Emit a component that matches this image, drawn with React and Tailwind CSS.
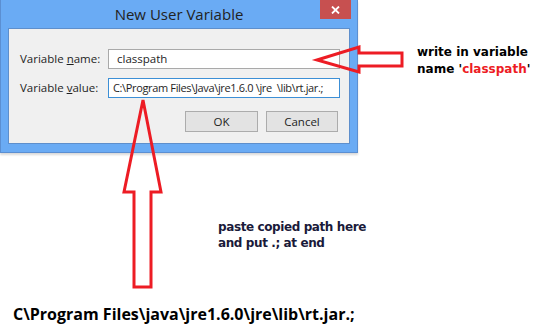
import React from 'react';

const Arrows = () => (
  <svg className="absolute inset-0 pointer-events-none" width="539" height="330" viewBox="0 0 539 330">
    <polygon
      points="317,60 359,47 359,53 402,53 402,66 359,66 359,72"
      fill="none"
      stroke="#ed1c24"
      strokeWidth="3"
      strokeLinejoin="miter"
    />
    <polygon
      points="143,100 161,192 151,192 151,287 134,287 134,192 124,192"
      fill="none"
      stroke="#ed1c24"
      strokeWidth="3"
      strokeLinejoin="miter"
    />
  </svg>
);

const App = () => {
  return (
    <div className="relative w-[539px] h-[330px] bg-white overflow-hidden" style={{ fontFamily: '"Open Sans", "Noto Sans", sans-serif' }}>
      {/* Top: dialog + note */}
      <div className="flex">
        {/* Dialog */}
        <div className="w-[358px] h-[153px] bg-[#6aabf4] border border-[#5b8fd2] border-t-0 shadow-[0_2px_2px_rgba(0,0,0,0.15)] flex flex-col">
          {/* Title bar */}
          <div className="relative h-[28px] flex items-center justify-center">
            <span className="text-[15px] text-[#222] leading-none">New User Variable</span>
            <div className="absolute right-[6px] top-0 w-[31px] h-[19px] bg-[#c75050] flex items-center justify-center">
              <svg width="9" height="8" viewBox="0 0 9 8">
                <path d="M1 0.5 L8 7.5 M8 0.5 L1 7.5" stroke="#fff" strokeWidth="1.8" />
              </svg>
            </div>
          </div>
          {/* Panel */}
          <div className="mx-[7px] h-[116px] bg-[#f0f0f0] border border-[#5e8fcc] pt-[20px] pl-[11px] pr-[8px] flex flex-col">
            <div className="flex items-center h-[20px]">
              <span className="w-[88px] text-[11.5px] text-[#1e1e1e]">
                Variable <span className="underline">n</span>ame:
              </span>
              <div className="w-[232px] h-[20px] bg-white border border-[#a9a9a9] flex items-center pl-[8px] text-[11.5px] text-[#1e1e1e]">
                classpath
              </div>
            </div>
            <div className="flex items-center h-[20px] mt-[9px]">
              <span className="w-[88px] text-[11.5px] text-[#1e1e1e]">
                Variable <span className="underline">v</span>alue:
              </span>
              <div className="w-[232px] h-[20px] bg-white border border-[#3c8fd6] flex items-center pl-[4px] text-[11px] text-[#1e1e1e] whitespace-pre overflow-hidden tracking-[-0.35px]">
                {'C:\\Program Files\\Java\\jre1.6.0 \\jre  \\lib\\rt.jar.;'}
              </div>
            </div>
            <div className="flex justify-end gap-[8px] mt-[13px] pr-[3px]">
              <button className="w-[73px] h-[21px] bg-[#e3e3e3] border border-[#acacac] text-[11.5px] text-[#1e1e1e] leading-none">
                OK
              </button>
              <button className="w-[72px] h-[21px] bg-[#e3e3e3] border border-[#acacac] text-[11.5px] text-[#1e1e1e] leading-none">
                Cancel
              </button>
            </div>
          </div>
        </div>

        {/* Note 1 */}
        <div className="ml-[59px] mt-[44px] text-[12px] font-bold leading-[17px] text-black" style={{ fontFamily: '"DejaVu Sans", Verdana, sans-serif' }}>
          <div>write in variable</div>
          <div>
            name '<span className="text-[#ed1c24]">classpath</span>'
          </div>
        </div>
      </div>

      {/* Note 2 */}
      <div className="ml-[218px] mt-[66px] text-[12px] font-bold leading-[16px] text-[#1a1a3a]" style={{ fontFamily: '"DejaVu Sans", Verdana, sans-serif' }}>
        <div className="tracking-[-0.4px]">paste copied path here</div>
        <div className="tracking-[-0.4px]">and put .; at end</div>
      </div>

      {/* Bottom path */}
      <div className="ml-[13px] mt-[55px] text-[16px] font-bold leading-none text-black">
        {'C\\Program Files\\java\\jre1.6.0\\jre\\lib\\rt.jar.;'}
      </div>

      <Arrows />
    </div>
  );
};

export default App;
